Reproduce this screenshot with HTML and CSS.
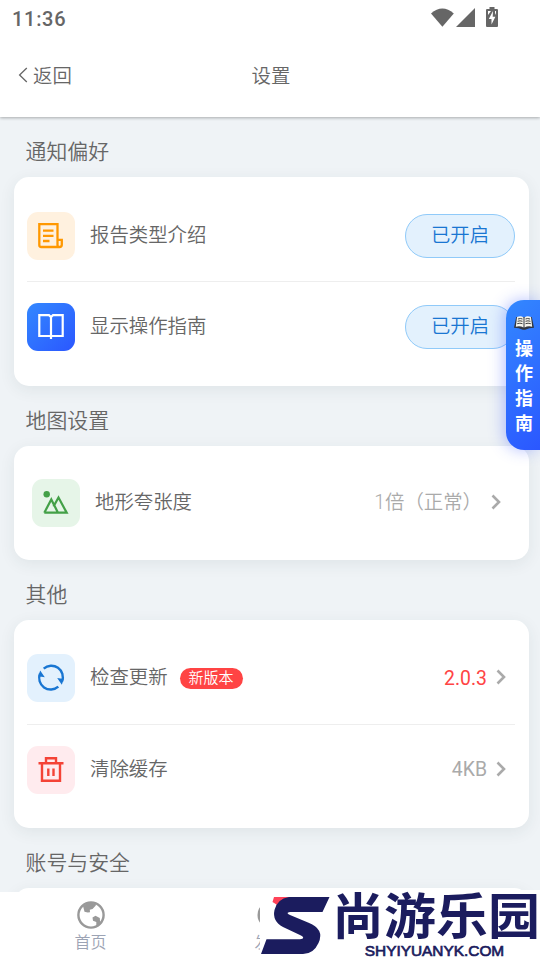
FILE: index.html
```html
<!DOCTYPE html>
<html lang="zh-CN">
<head>
<meta charset="utf-8">
<title>设置</title>
<link rel="stylesheet" href="styles.css">
</head>
<body>
<div class="screen">
  <header class="top">
    <div class="status">
      <span class="time">11:36</span>
      <svg class="status-icons" width="70" height="22" viewBox="0 0 70 22" fill="#666">
        <path d="M1 6.800Q12.300-3 23.800 6.800L12.400 20.200Z" transform="translate(0 .6)"/>
        <path d="M26 21L45 2V21Z"/>
        <path d="M59.500 1H64.500V3H67Q68 3 68 4.200V20Q68 21 67 21H57Q56 21 56 20V4.200Q56 3 57 3H59.500Z"/>
        <path fill="#fff" d="M63 5L58.800 13H61.500V18.500L65.400 10.800H62.700ZM58 5H61L58 9ZM65 5H66V9L65 7Z"/>
      </svg>
    </div>
    <nav class="titlebar">
      <span class="back"><svg width="10" height="16" viewBox="0 0 10 16" fill="none" stroke="#666" stroke-width="1.300"><path d="M8.800 1L1.600 8L8.800 15"/></svg>返回</span>
      <h1>设置</h1>
      <span></span>
    </nav>
  </header>

  <main class="content">
    <h2>通知偏好</h2>
    <section class="card card-notify">
      <div class="row">
        <span class="tile orange"><svg width="28" height="28" viewBox="0 0 28 28" fill="none" stroke="#ff9800" stroke-width="2.300"><path d="M20.500 18.500V2.200H2.300V23Q2.300 25 4.300 25H22.500Q24.800 25 24.800 22.700V17.800H20.500V23Q20.500 25 22.500 25M6 8.700H16.500M6 13.800H16.500M6 19H12.500"/></svg></span>
        <span class="label">报告类型介绍</span>
        <span class="pill">已开启</span>
      </div>
      <div class="row">
        <span class="tile blue"><svg width="28" height="28" viewBox="0 0 28 28" fill="none" stroke="#fff" stroke-width="2.200"><path d="M2.300 2.200H12L14 4L16 2.200H25.700V23H2.300ZM14 4V26"/></svg></span>
        <span class="label">显示操作指南</span>
        <span class="pill">已开启</span>
      </div>
    </section>

    <h2>地图设置</h2>
    <section class="card card-map">
      <div class="row">
        <span class="tile green"><svg width="28" height="28" viewBox="0 0 28 28" fill="none" stroke="#43a047" stroke-width="2.200"><circle cx="4.700" cy="5.300" r="3.200" fill="#43a047" stroke="none"/><path d="M2.300 23.700H24.700L16.500 8.500L11.500 17.500M2.300 23.700L9.300 10.500L16 23.700"/></svg></span>
        <span class="label">地形夸张度</span>
        <span class="value">1倍（正常）</span>
        <svg class="chevron" width="10" height="16" viewBox="0 0 10 16"><path d="M1.500 1.500L8 8L1.500 14.500"/></svg>
      </div>
    </section>

    <h2>其他</h2>
    <section class="card card-other">
      <div class="row">
        <span class="tile sky"><svg width="28" height="28" viewBox="0 0 28 28" fill="none" stroke="#1976d2" stroke-width="2.400"><path d="M6.700 4.600A11.500 11.500 0 0 1 25 17.500M21.300 22.600A11.500 11.500 0 0 1 3 9.700"/><path fill="#1976d2" stroke="none" d="M20.200 14L26.800 15L24.800 20.700ZM7.800 13.200L1.200 12.200L3.200 6.500Z"/></svg></span>
        <span class="label">检查更新</span>
        <span class="badge">新版本</span>
        <span class="value new">2.0.3</span>
        <svg class="chevron" width="10" height="16" viewBox="0 0 10 16"><path d="M1.500 1.500L8 8L1.500 14.500"/></svg>
      </div>
      <div class="row">
        <span class="tile pink"><svg width="28" height="28" viewBox="0 0 28 28" fill="none" stroke="#f44336" stroke-width="2.400"><path d="M1.500 7.300H26.500M5 7.300V24.700H23V7.300M9 7.300V2.200H19V7.300M11.300 12.500V20M16.500 12.500V20"/></svg></span>
        <span class="label">清除缓存</span>
        <span class="value">4KB</span>
        <svg class="chevron" width="10" height="16" viewBox="0 0 10 16"><path d="M1.500 1.500L8 8L1.500 14.500"/></svg>
      </div>
    </section>

    <h2>账号与安全</h2>
    <section class="card card-account"></section>
  </main>

  <aside class="guide">
    <svg width="20" height="14" viewBox="0 0 20 14"><path d="M2.200 1L0 11.800Q5 12 8.800 13.800H11.200Q15 12 20 11.800L17.800 1Z" fill="#303642"/><path d="M3 1Q7-.7 9.500 1.500V11.500Q6 9.500 1.800 10.700ZM17 1Q13-.7 10.500 1.500V11.500Q14 9.500 18.200 10.700Z" fill="#f5f4ec"/><path d="M4 3Q6.500 2 8.500 3M3.600 5.300Q6 4.300 8.500 5.300M3.200 7.700Q6 6.700 8.500 7.700M16 3Q13.500 2 11.500 3M16.400 5.300Q14 4.300 11.500 5.300M16.800 7.700Q14 6.700 11.500 7.700" stroke="#444" fill="none"/></svg>
    <span>操</span><span>作</span><span>指</span><span>南</span>
  </aside>

  <nav class="tabs">
    <span class="tab"><svg width="28" height="28" viewBox="0 0 28 28"><circle cx="14" cy="14" r="12.600" fill="none" stroke="#999" stroke-width="2.400"/><path fill="#999" d="M6 5L11 1.800L19 2.300L18.800 4.500L15.500 8L12.800 8.700L13 11.300L10.700 11.500L7.500 10.700ZM15.500 16.500L18.500 14.800L22.800 17L23 20L24.500 22L21 25.500L19.300 24.600V21L16 19.700Z"/></svg>首页</span>
    <span class="tab"><svg width="28" height="28" viewBox="0 0 28 28"><circle cx="14" cy="14" r="13.500" fill="#999"/></svg>发现</span>
    <span class="tab"></span>
  </nav>

  <div class="watermark">
    <svg width="72" height="64" viewBox="0 0 72 64"><path d="M14 7H30L17.500 18L16.500 14.500L12.500 12Z" fill="#ff4258"/><path d="M29 7H69.500L62.500 22H30Q25 22.500 30 25L48 32.500Q65 39 58.500 53Q53.500 64 43 64H1L6.500 49.300H40Q46 48.500 41 45.500L23 37Q12 31 14.500 20Q17 9 29 7Z" fill="#1b1c5e"/></svg>
    <div class="brand">
      <span class="brand-name">尚游乐园</span>
      <span class="brand-url">SHYIYUANYK.COM</span>
    </div>
  </div>
</div>
</body>
</html>
```

FILE: styles.css
```css
* { box-sizing: border-box; }
body {
  margin: 0;
  background: #eff3f6;
  color: #666;
  font-family: Roboto, "Noto Sans CJK SC", sans-serif;
  font-size: 19.4px;
}
svg { display: block; flex: none; }
.screen {
  position: relative;
  width: 540px;
  height: 960px;
  overflow: hidden;
  background: #eff3f6;
}
.top {
  height: 117px;
  background: #fff;
  box-shadow: 0 1px 3px rgba(0, 0, 0, .3);
}
.status {
  display: flex;
  justify-content: space-between;
  height: 36px;
  padding: 6px 40px 0 12px;
}
.time { font-size: 20px; font-weight: 500; line-height: 26px; letter-spacing: .7px; }
.titlebar {
  display: grid;
  grid-template-columns: 1fr auto 1fr;
  align-items: center;
  height: 77px;
  padding: 0 16px 0 18px;
}
.back { display: flex; align-items: center; gap: 5px; }
h1, h2, .back, .label, .pill, .badge, .tab { font-weight: 350; }
h1, h2 { margin: 0; }
h1 { font-size: 19.4px; }
h2 {
  height: 60px;
  padding: 6px 25.5px 0;
  font-size: 20.9px;
  line-height: 58px;
}
.card {
  margin: 0 11px 0 14px;
  padding: 12px 14px 0 13px;
  border-radius: 15px;
  background: #fff;
  box-shadow: 0 4px 16px rgba(40, 60, 70, .08);
}
.card-notify { height: 209px; padding-top: 14px; }
.card-map { height: 114px; padding: 11px 19px 0 18px; }
.card-other { height: 208px; }
.card-account { height: 90px; }
.row {
  display: flex;
  align-items: center;
  height: 92px;
}
.row + .row { height: 90px; }
.row:has(+ .row) { border-bottom: 1px solid #eee; }
.card-notify .row:first-child { height: 91px; }
.card-other .row:first-child { height: 93px; }
.tile {
  display: flex;
  align-items: center;
  justify-content: center;
  width: 48px;
  height: 48px;
  margin-right: 15px;
  border-radius: 11px;
}
.orange { background: #fff1df; }
.blue { background: linear-gradient(135deg, #3388ff, #2b57ff); }
.green { background: #e6f5e8; }
.sky { background: #e3f1fd; }
.pink { background: #ffebee; }
.label, .pill, .value { line-height: 28px; }
.pill {
  display: flex;
  align-items: center;
  justify-content: center;
  width: 110px;
  height: 44px;
  margin-left: auto;
  border: 1px solid #90caf9;
  border-radius: 22px;
  background: #e3f1fd;
  color: #1976d2;
}
.badge {
  height: 21px;
  margin-left: 12px;
  padding: 0 9px;
  border-radius: 11px;
  background: #ff4444;
  color: #fff;
  font-size: 15px;
  line-height: 20px;
}
.value { margin-left: auto; color: #aaa; }
.card-map .value { font-weight: 350; }
.new { padding-top: 1px; color: #ff4444; }
.chevron {
  margin: 0 9px 2px;
  fill: none;
  stroke: #aaa;
  stroke-width: 2.6;
}
.guide {
  position: absolute;
  top: 300px;
  right: 0;
  display: flex;
  flex-direction: column;
  align-items: center;
  width: 34px;
  height: 150px;
  padding: 16px 0 0 2px;
  border-radius: 18px 0 0 18px;
  background: linear-gradient(135deg, #3388ff, #2b57ff);
  box-shadow: -2px 0 15px rgba(50, 80, 255, .35);
  color: #fff;
  font-size: 18px;
  font-weight: 700;
  line-height: 25.2px;
}
.guide svg { margin-bottom: 5.5px; }
.tabs {
  position: absolute;
  left: 0;
  right: 0;
  bottom: 0;
  display: grid;
  grid-template-columns: repeat(3, 1fr);
  height: 68px;
  background: #fff;
  color: #9ca3b4;
  font-size: 16px;
}
.tab {
  display: flex;
  flex-direction: column;
  align-items: center;
  padding: 9px 0 0 1px;
  line-height: 28px;
}
.watermark {
  position: absolute;
  right: 0;
  bottom: 0;
  display: flex;
  width: 280px;
  height: 70px;
  background: #fff;
  color: #1b1c5e;
}
.brand {
  display: flex;
  flex-direction: column;
  align-items: center;
  width: 208px;
}
.brand-name {
  font-size: 51px;
  font-weight: 700;
  line-height: 52px;
  white-space: nowrap;
  transform: translateY(1.5px) scale(1.02, .96);
}
.brand-url {
  margin-right: 3px;
  font-family: "Liberation Sans", sans-serif;
  font-size: 15.4px;
  -webkit-text-stroke: .7px #1b1c5e;
  line-height: 18px;
}
```
